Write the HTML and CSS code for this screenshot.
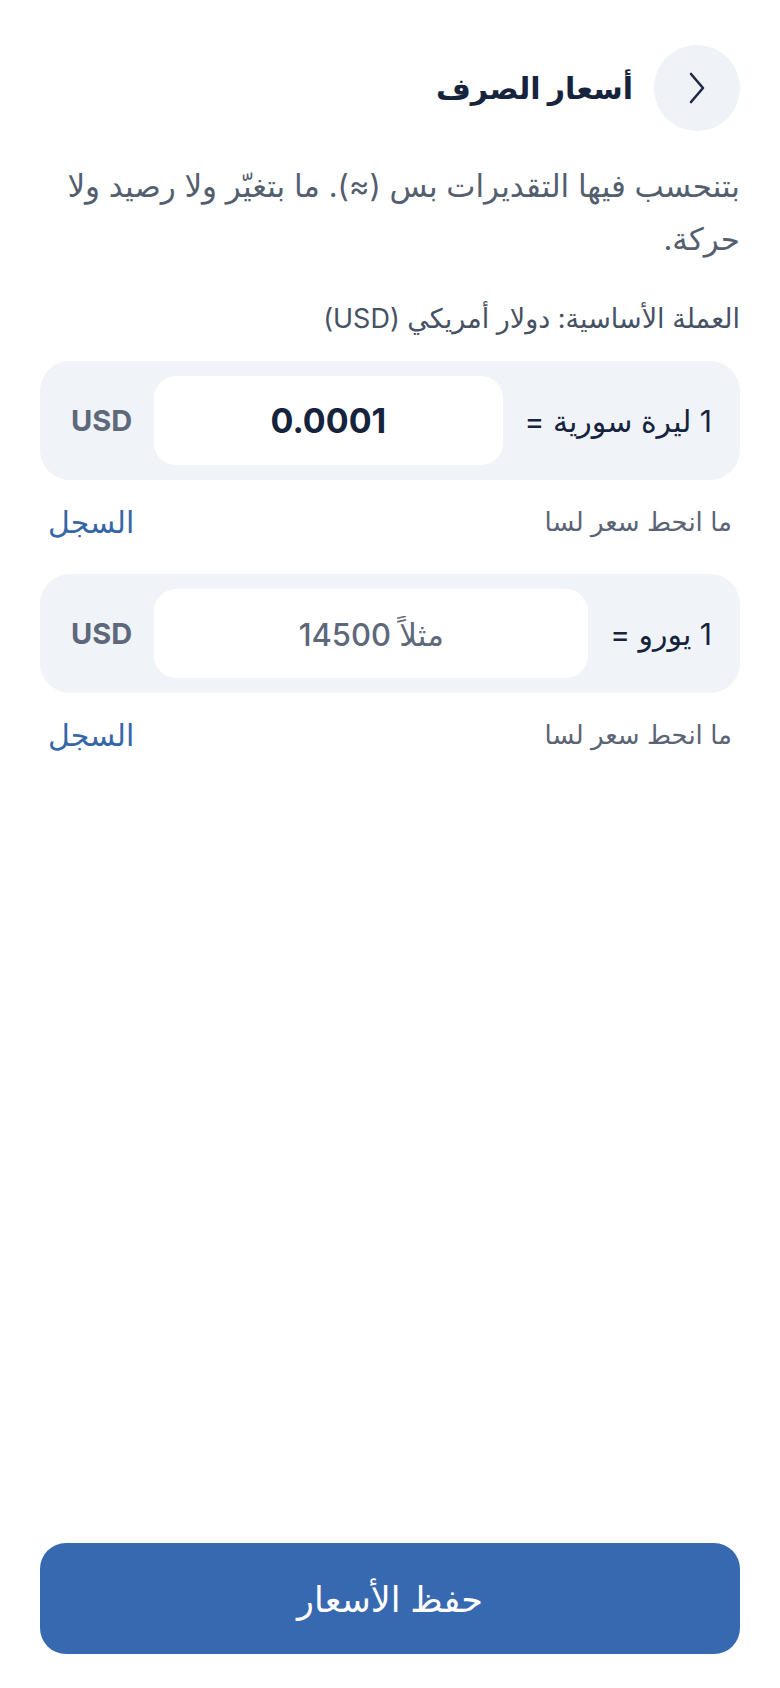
FILE: index.html
```html
<!DOCTYPE html>
<html lang="ar" dir="rtl">
<head>
    <meta charset="utf-8">
    <meta name="viewport" content="width=device-width, initial-scale=1.0">
    <title>أسعار الصرف</title>
    <link rel="stylesheet" href="styles.css">
</head>
<body>
    <div class="page">
        <div class="header">
            <button class="back">
                <svg width="18" height="32" viewBox="0 0 18 32">
                    <path d="M3 2 L15 16 L3 30" fill="none" stroke="#1c2a44" stroke-width="2.6" stroke-linecap="round" stroke-linejoin="round"/>
                </svg>
            </button>
            <h1 class="title">أسعار الصرف</h1>
        </div>

        <p class="desc">بتنحسب فيها التقديرات بس (≈). ما بتغيّر ولا رصيد ولا حركة.</p>

        <p class="base">العملة الأساسية: دولار أمريكي (USD)</p>

        <div class="rate-card">
            <span class="rate-label">1 ليرة سورية =</span>
            <input class="rate-input" type="text" value="0.0001" dir="ltr">
            <span class="rate-cur">USD</span>
        </div>
        <div class="rate-note">
            <span>ما انحط سعر لسا</span>
            <a class="history" href="#">السجل</a>
        </div>

        <div class="rate-card">
            <span class="rate-label">1 يورو =</span>
            <input class="rate-input" type="text" placeholder="مثلاً 14500">
            <span class="rate-cur">USD</span>
        </div>
        <div class="rate-note">
            <span>ما انحط سعر لسا</span>
            <a class="history" href="#">السجل</a>
        </div>

        <button class="save">حفظ الأسعار</button>
    </div>
</body>
</html>
```

FILE: styles.css
```css
body {
    margin: 0;
    background-color: #ffffff;
    font-family: Inter, "DejaVu Sans", sans-serif;
}

.page {
    min-height: 100vh;
    box-sizing: border-box;
    padding: 45px 40px 34px;
    display: flex;
    flex-direction: column;
}

.header {
    display: flex;
    align-items: center;
    gap: 21px;
}

.back {
    width: 86px;
    height: 86px;
    border-radius: 50%;
    border: none;
    background-color: #eff2f6;
    display: flex;
    align-items: center;
    justify-content: center;
    padding: 0;
}

.title {
    margin: 0;
    font-size: 30px;
    font-weight: 700;
    color: #16233d;
}

.desc {
    margin: 28px 0 0;
    font-size: 31px;
    line-height: 53px;
    color: #535e6f;
}

.base {
    margin: 38px 0 0;
    font-size: 27px;
    line-height: 32px;
    color: #465164;
}

.rate-card {
    margin-top: 26px;
    height: 119px;
    box-sizing: border-box;
    padding: 15px 28px 15px 31px;
    border-radius: 30px;
    background-color: #f0f3f7;
    display: flex;
    align-items: center;
    gap: 22px;
}

.rate-label {
    font-size: 30px;
    color: #16233d;
    white-space: nowrap;
}

.rate-input {
    flex: 1;
    min-width: 0;
    height: 89px;
    box-sizing: border-box;
    border: none;
    border-radius: 22px;
    background-color: #ffffff;
    text-align: center;
    font-family: Inter, "DejaVu Sans", sans-serif;
    font-size: 34px;
    font-weight: 700;
    color: #16233d;
    outline: none;
}

.rate-input::placeholder {
    color: #5d687b;
    font-size: 31px;
    font-weight: 500;
}

.rate-cur {
    font-size: 29px;
    font-weight: 700;
    color: #5d687b;
}

.rate-note {
    margin: 26px 8px 0;
    display: flex;
    justify-content: space-between;
    align-items: center;
    font-size: 26px;
    line-height: 32px;
    color: #5a6475;
}

.history {
    color: #3466a8;
    text-decoration: none;
    font-size: 30px;
}

.rate-note + .rate-card {
    margin-top: 36px;
}

.save {
    margin-top: auto;
    height: 111px;
    border: none;
    border-radius: 26px;
    background-color: #3769b0;
    color: #ffffff;
    font-family: Inter, "DejaVu Sans", sans-serif;
    font-size: 35px;
}
```
